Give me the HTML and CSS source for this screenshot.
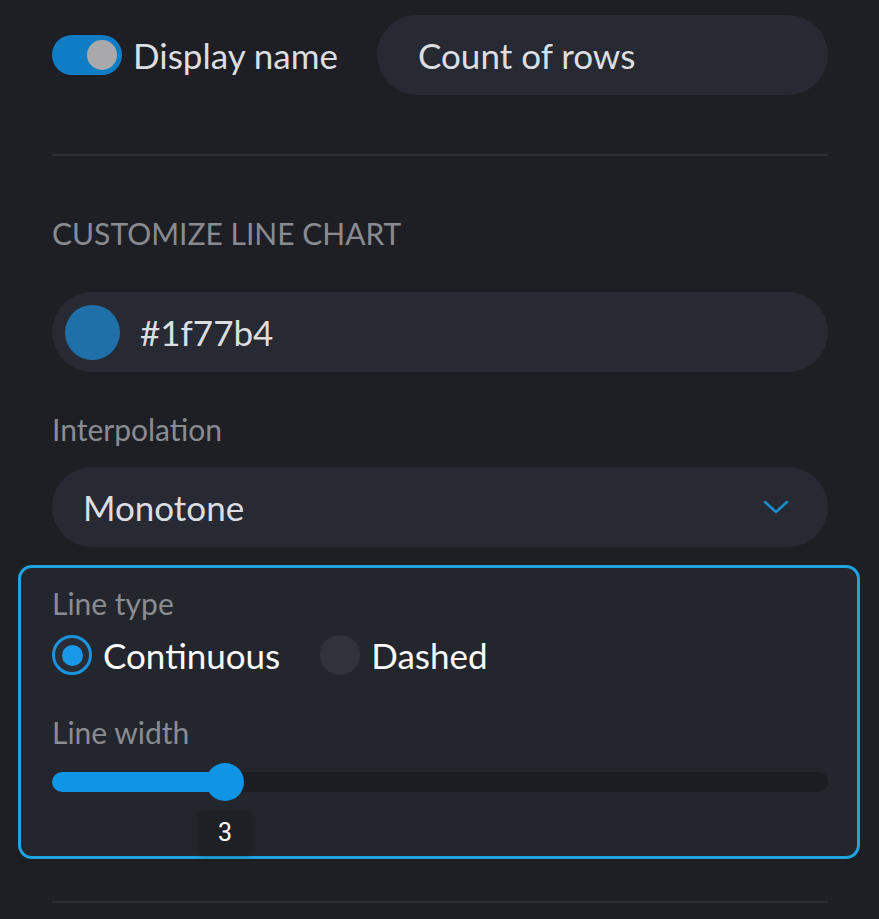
FILE: index.html
```html
<!DOCTYPE html>
<html lang="en">
<head>
  <meta charset="UTF-8" />
  <meta name="viewport" content="width=device-width, initial-scale=1.0"/>
  <title>Line chart settings</title>
  <link rel="stylesheet" href="styles.css">
</head>
<body>
  <div class="settings">
    <div class="name-row">
      <span class="toggle"><span class="toggle-knob"></span></span>
      <span class="toggle-label">Display name</span>
      <div class="field name-field">Count of rows</div>
    </div>

    <hr class="divider first-divider" />

    <h2 class="section-title">CUSTOMIZE LINE CHART</h2>

    <div class="field color-field">
      <span class="swatch"></span>
      <span>#1f77b4</span>
    </div>

    <label class="label interp-label">Interpolation</label>
    <div class="field select-field">
      <span>Monotone</span>
      <svg class="chevron" width="26" height="16" viewBox="0 0 26 16">
        <polyline points="2,3 13,13 24,3" fill="none" stroke="#1a8fd2" stroke-width="2.5" stroke-linecap="round" stroke-linejoin="round"/>
      </svg>
    </div>

    <div class="line-box">
      <label class="label">Line type</label>
      <div class="radio-row">
        <span class="radio checked"><span class="radio-dot"></span></span>
        <span class="radio-text">Continuous</span>
        <span class="radio"></span>
        <span class="radio-text">Dashed</span>
      </div>

      <label class="label width-label">Line width</label>
      <div class="slider">
        <div class="slider-fill" style="width: 173px;"></div>
        <div class="slider-thumb">
          <span class="slider-tip">3</span>
        </div>
      </div>
    </div>

    <hr class="divider last-divider" />
  </div>
</body>
</html>
```

FILE: styles.css
```css
body {
  font-family: 'Lato', 'Noto Sans', sans-serif;
  background-color: #1e1f25;
  margin: 0;
  padding: 15px 51px 0 52px;
}

.settings {
  display: flex;
  flex-direction: column;
}

.name-row {
  display: flex;
  align-items: center;
  height: 80px;
}

.toggle {
  width: 70px;
  height: 40px;
  border-radius: 20px;
  background-color: #0f7dc5;
  display: flex;
  align-items: center;
  justify-content: flex-end;
  padding-right: 5px;
  box-sizing: border-box;
}

.toggle-knob {
  width: 30px;
  height: 30px;
  border-radius: 50%;
  background-color: #a9a9ab;
}

.toggle-label {
  margin-left: 11px;
  font-size: 35px;
  color: #dcdee2;
}

.field {
  height: 80px;
  border-radius: 40px;
  background-color: #272a32;
  display: flex;
  align-items: center;
  box-sizing: border-box;
  font-size: 35px;
  color: #dcdee2;
}

.name-field {
  margin-left: auto;
  width: 451px;
  padding-left: 41px;
}

.divider {
  border: none;
  border-top: 2px solid #2c2e37;
  margin: 0;
}

.first-divider {
  margin-top: 59px;
}

.section-title {
  margin: 59px 0 0;
  font-size: 30px;
  line-height: 36px;
  font-weight: normal;
  color: #898b91;
}

.color-field {
  margin-top: 41px;
  padding-left: 13px;
  gap: 20px;
}

.swatch {
  width: 55px;
  height: 55px;
  border-radius: 50%;
  background-color: #1f6fa8;
}

.label {
  display: block;
  font-size: 30px;
  line-height: 36px;
  color: #8a8c92;
}

.interp-label {
  margin-top: 39px;
}

.select-field {
  margin-top: 20px;
  padding: 0 39px 0 31px;
  justify-content: space-between;
}

.line-box {
  margin: 18px -32px 0 -34px;
  padding: 17px 29px 54px 31px;
  border: 3px solid #1ea3df;
  border-radius: 14px;
  background-color: #24262d;
}

.radio-row {
  display: flex;
  align-items: center;
  height: 40px;
  margin-top: 14px;
}

.radio {
  width: 40px;
  height: 40px;
  border-radius: 50%;
  background-color: #30333c;
  display: flex;
  align-items: center;
  justify-content: center;
  box-sizing: border-box;
}

.radio.checked {
  background-color: #2a2d35;
  border: 3px solid #1a93dc;
}

.radio-dot {
  width: 21px;
  height: 21px;
  border-radius: 50%;
  background-color: #1799e8;
}

.radio-text {
  margin: 0 40px 0 11px;
  font-size: 35px;
  color: #fafafa;
}

.width-label {
  margin-top: 39px;
}

.slider {
  margin-top: 12px;
  height: 40px;
  display: flex;
  align-items: center;
  position: relative;
}

.slider::before {
  content: "";
  position: absolute;
  left: 0;
  right: 0;
  top: 10px;
  height: 20px;
  border-radius: 10px;
  background-color: #1c1d22;
}

.slider-fill {
  height: 20px;
  border-radius: 10px 0 0 10px;
  background-color: #0f94e6;
  position: relative;
}

.slider-thumb {
  width: 38px;
  height: 38px;
  border-radius: 50%;
  background-color: #0f94e6;
  margin-left: -19px;
  position: relative;
}

.slider-tip {
  position: absolute;
  top: 48px;
  left: -7px;
  width: 52px;
  height: 43px;
  display: flex;
  align-items: center;
  justify-content: center;
  background-color: #1f2026;
  border-radius: 4px;
  box-shadow: 0 2px 6px rgba(0,0,0,0.25);
  font-family: 'Roboto', sans-serif;
  font-size: 25px;
  color: #ffffff;
}

.last-divider {
  margin-top: 42px;
}
```
